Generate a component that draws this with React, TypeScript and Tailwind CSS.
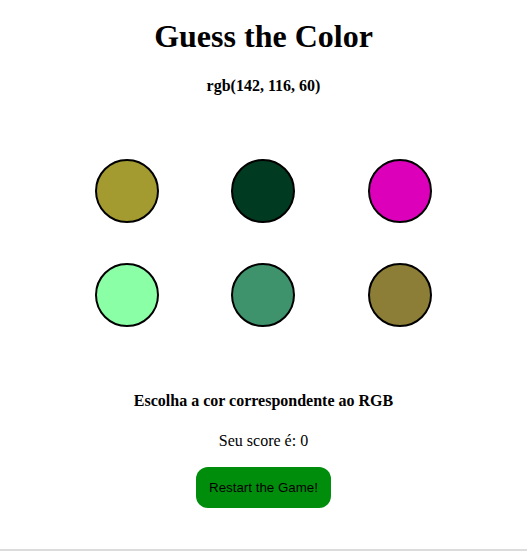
const colors = ["#a39a30", "#003a20", "#dc00bb", "#8bffa6", "#3e926c", "#8c7d37"]

export default function App() {
  return (
    <div className="h-[551px] bg-white border-b-2 border-[#dcdcdc] font-['Liberation_Serif',serif] text-black text-center">
      <h1 className="pt-[18px] text-[32px] leading-[37px] font-bold">Guess the Color</h1>
      <p className="mt-[22px] text-[16px] leading-[18px] font-bold">rgb(142, 116, 60)</p>

      <div className="mt-[64px] mx-auto w-[410px] grid grid-cols-3 gap-y-[40px] justify-items-center">
        {colors.map((c) => (
          <button
            key={c}
            className="w-[64px] h-[64px] rounded-full border-2 border-black"
            style={{ backgroundColor: c }}
          />
        ))}
      </div>

      <p className="mt-[65px] text-[16px] leading-[18px] font-bold">Escolha a cor correspondente ao RGB</p>
      <p className="mt-[22px] text-[16px] leading-[18px]">Seu score é: 0</p>

      <button className="mt-[17px] w-[135px] h-[41px] rounded-[12px] bg-[#018d0c] font-['Liberation_Sans',Arial,sans-serif] text-[13.333px] text-black">
        Restart the Game!
      </button>
    </div>
  )
}
